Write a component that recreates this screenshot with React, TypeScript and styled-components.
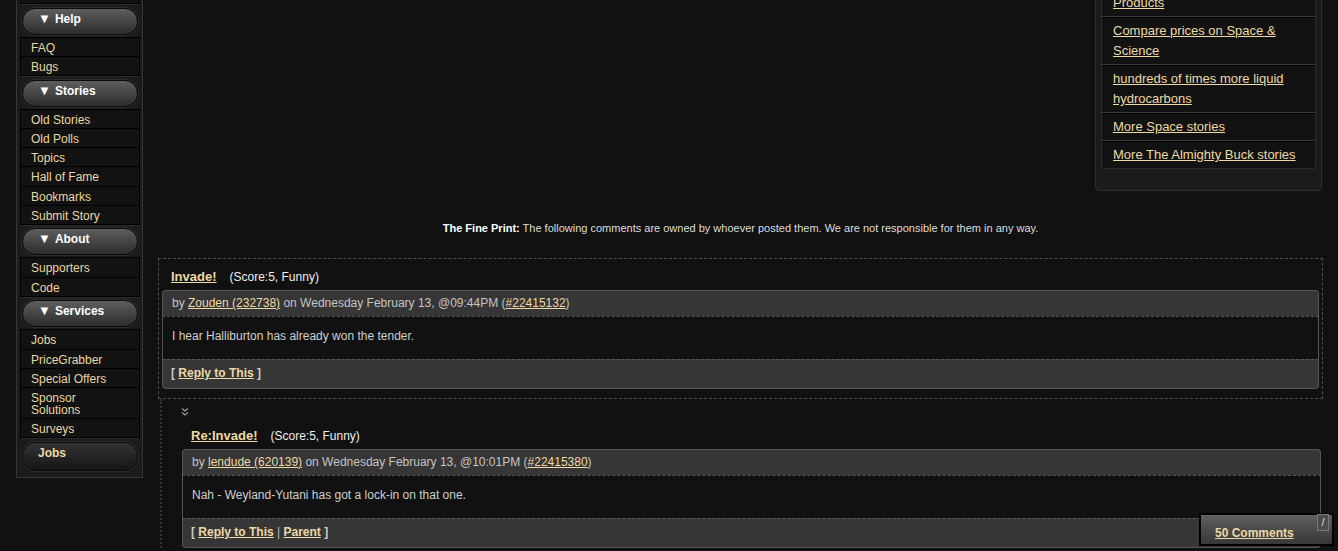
import React from "react";
import styled, { createGlobalStyle } from "styled-components";

const Global = createGlobalStyle`
  html, body { margin: 0; padding: 0; background: #111; height: 100%; overflow: hidden; }
  body { font-family: "Liberation Sans", Arial, Helvetica, sans-serif; color: #ccc; }
  a { color: #ecd9a6; }
`;

const Page = styled.div`
  display: flex;
  align-items: flex-start;
  gap: 15px;
  padding: 0 15px 0 16px;
  margin-top: -18px;
`;

const Nav = styled.nav`
  flex: 0 0 127px;
  width: 127px;
  box-sizing: border-box;
  background: #1b1b1b;
  border: 1px solid #363636;
  border-top: none;
  padding: 2px 2px 4px 3px;
`;

const NavHeader = styled.div<{ $plain?: boolean }>`
  box-sizing: border-box;
  height: ${(p) => (p.$plain ? 29 : 27)}px;
  margin: 2.6px 2px 2px 2px;
  border-radius: 14px;
  border: 1px solid #0b0b0b;
  box-shadow: 0 0 0 1px #2c2c2c;
  background: ${(p) =>
    p.$plain
      ? "linear-gradient(to bottom, #333 0%, #242424 50%, #161616 100%)"
      : "linear-gradient(to bottom, #5e5e5e 0%, #474747 45%, #2d2d2d 100%)"};
  color: ${(p) => (p.$plain ? "#ecd9a6" : "#fff")};
  font-size: 12px;
  font-weight: bold;
  line-height: 14px;
  padding: 3px 0 0 15px;
  display: flex;
  align-items: flex-start;
`;

const Tri = styled.span`
  font-size: 13px;
  margin-right: 4px;
  line-height: 14px;
`;

const LinkBox = styled.ul`
  list-style: none;
  margin: 0;
  padding: 0;
  background: #121212;
  border: 1px solid #000;
  border-bottom-color: #2a2a2a;
`;

const NavItem = styled.li`
  border-bottom: 1px solid #000;
  padding: 4px 0 2.2px 10px;
  font-size: 12px;
  line-height: 12px;
  color: #e8d6a4;
`;

const Main = styled.main`
  flex: 1;
  min-width: 0;
  display: flex;
  flex-direction: column;
`;

const SideBox = styled.aside`
  align-self: flex-end;
  width: 227px;
  box-sizing: border-box;
  margin: 7px 1px 0 0;
  background: #1b1b1b;
  border: 1px solid #2e2e2e;
  border-radius: 0 0 4px 4px;
  padding: 0 5px 21px 5px;
`;

const SideList = styled.ul`
  list-style: none;
  margin: 0;
  padding: 0;
  background: #121212;
  border: 1px solid #2c2c2c;
  border-top: none;
  border-radius: 0 0 3px 3px;
`;

const SideItem = styled.li`
  padding: 3px 10px 3px 11px;
  font-size: 13px;
  line-height: 20px;
  &:not(:last-child) { border-bottom: 1px solid #3a3a3a; }
  & + & { border-top: 1px solid #000; }
`;

const FinePrint = styled.p`
  margin: 31px 0 0;
  text-align: center;
  font-size: 11px;
  line-height: 13px;
  color: #ddd;
  b { color: #fff; }
`;

const Thread = styled.div`
  margin-top: 23px;
`;

const CommentBox = styled.div<{ $nested?: boolean }>`
  border: ${(p) => (p.$nested ? "none" : "1px dashed #4d4d4d")};
  padding: ${(p) => (p.$nested ? "0 2px 0 4px" : "0 3px 9px 3px")};
`;

const TitleRow = styled.div`
  display: flex;
  align-items: baseline;
  padding: 10px 9px 5px;
  line-height: 16px;
`;

const TitleLink = styled.a`
  font-size: 13px;
  font-weight: bold;
`;

const Score = styled.span`
  margin-left: 13px;
  font-size: 12px;
  color: #eee;
`;

const Details = styled.div`
  background: #363636;
  border: 1px solid #565656;
  border-bottom: none;
  border-radius: 4px 4px 0 0;
  padding: 5px 9px 5px;
  font-size: 12px;
  line-height: 15px;
  color: #c4c4c4;
`;

const Body = styled.div`
  background: #111;
  border-left: 1px solid #565656;
  border-right: 1px solid #565656;
  border-top: 1px dashed #565656;
  padding: 10px 9px 14px;
  font-size: 12px;
  line-height: 18px;
  color: #cfcfcf;
`;

const Footer = styled.div`
  background: #363636;
  border: 1px solid #565656;
  border-top: 1px dashed #565656;
  border-radius: 0 0 4px 4px;
  padding: 6px 8px 7px;
  font-size: 12px;
  font-weight: bold;
  line-height: 15px;
  color: #ccc;
`;

const Sep = styled.span`
  font-weight: normal;
  color: #bbb;
`;

const Replies = styled.div`
  margin-left: 2px;
  border-left: 2px dotted #333;
  padding-left: 16px;
`;

const Toggle = styled.div`
  height: 19px;
  box-sizing: border-box;
  padding: 8px 0 0 3px;
  display: flex;
  align-items: flex-start;
`;

const CountBar = styled.div`
  position: fixed;
  right: 4px;
  bottom: 5px;
  width: 135px;
  height: 33px;
  box-sizing: border-box;
  border: 2px solid #000;
  background: linear-gradient(to bottom, #606060 0%, #4a4a4a 50%, #383838 100%);
  padding: 11px 0 0 14px;
  font-size: 12px;
  font-weight: bold;
  line-height: 15px;
`;

const SlashBtn = styled.span`
  position: absolute;
  top: -1px;
  right: 3px;
  width: 12px;
  height: 17px;
  box-sizing: border-box;
  border: 1px solid #7a7a7a;
  background: #4d4d4d;
  color: #ddd;
  font-size: 11px;
  font-weight: normal;
  line-height: 15px;
  text-align: center;
`;

type NavSection = { title: string; items: string[][] };

const sections: NavSection[] = [
  { title: "Help", items: [["FAQ"], ["Bugs"]] },
  {
    title: "Stories",
    items: [["Old Stories"], ["Old Polls"], ["Topics"], ["Hall of Fame"], ["Bookmarks"], ["Submit Story"]],
  },
  { title: "About", items: [["Supporters"], ["Code"]] },
  {
    title: "Services",
    items: [["Jobs"], ["PriceGrabber"], ["Special Offers"], ["Sponsor", "Solutions"], ["Surveys"]],
  },
];

const sideLinks = [
  "Products",
  "Compare prices on Space & Science",
  "hundreds of times more liquid hydrocarbons",
  "More Space stories",
  "More The Almighty Buck stories",
];

const Chevrons = () => (
  <svg width="8" height="10" viewBox="0 0 8 10" fill="none" stroke="#9a9a9a" strokeWidth="1.2">
    <path d="M1 1.5 L4 4 L7 1.5" />
    <path d="M1 5.5 L4 8 L7 5.5" />
  </svg>
);

type CommentProps = {
  title: string;
  user: string;
  time: string;
  cid: string;
  text: string;
  nested?: boolean;
  parent?: boolean;
};

const Comment = ({ title, user, time, cid, text, nested, parent }: CommentProps) => (
  <CommentBox $nested={nested}>
    <TitleRow>
      <TitleLink href="#">{title}</TitleLink>
      <Score>(Score:5, Funny)</Score>
    </TitleRow>
    <Details>
      by <a href="#">{user}</a> on {time} (<a href="#">{cid}</a>)
    </Details>
    <Body>{text}</Body>
    <Footer>
      [ <a href="#">Reply to This</a>
      {parent && (
        <>
          {" "}
          <Sep>|</Sep> <a href="#">Parent</a>
        </>
      )}{" "}
      ]
    </Footer>
  </CommentBox>
);

export default function App() {
  return (
    <>
      <Global />
      <Page>
        <Nav>
          <LinkBox>
            <NavItem>Preferences</NavItem>
          </LinkBox>
          {sections.map((s) => (
            <React.Fragment key={s.title}>
              <NavHeader>
                <Tri>▼</Tri>
                {s.title}
              </NavHeader>
              <LinkBox>
                {s.items.map((lines) => (
                  <NavItem key={lines.join(" ")}>
                    {lines.map((l, i) => (
                      <React.Fragment key={l}>
                        {i > 0 && <br />}
                        {l}
                      </React.Fragment>
                    ))}
                  </NavItem>
                ))}
              </LinkBox>
            </React.Fragment>
          ))}
          <NavHeader $plain>Jobs</NavHeader>
        </Nav>
        <Main>
          <SideBox>
            <SideList>
              {sideLinks.map((l) => (
                <SideItem key={l}>
                  <a href="#">{l}</a>
                </SideItem>
              ))}
            </SideList>
          </SideBox>
          <FinePrint>
            <b>The Fine Print:</b> The following comments are owned by whoever posted them. We are not
            responsible for them in any way.
          </FinePrint>
          <Thread>
            <Comment
              title="Invade!"
              user="Zouden (232738)"
              time="Wednesday February 13, @09:44PM"
              cid="#22415132"
              text="I hear Halliburton has already won the tender."
            />
            <Replies>
              <Toggle>
                <Chevrons />
              </Toggle>
              <Comment
                nested
                parent
                title="Re:Invade!"
                user="lendude (620139)"
                time="Wednesday February 13, @10:01PM"
                cid="#22415380"
                text="Nah - Weyland-Yutani has got a lock-in on that one."
              />
            </Replies>
          </Thread>
        </Main>
      </Page>
      <CountBar>
        <a href="#">50 Comments</a>
        <SlashBtn>/</SlashBtn>
      </CountBar>
    </>
  );
}
